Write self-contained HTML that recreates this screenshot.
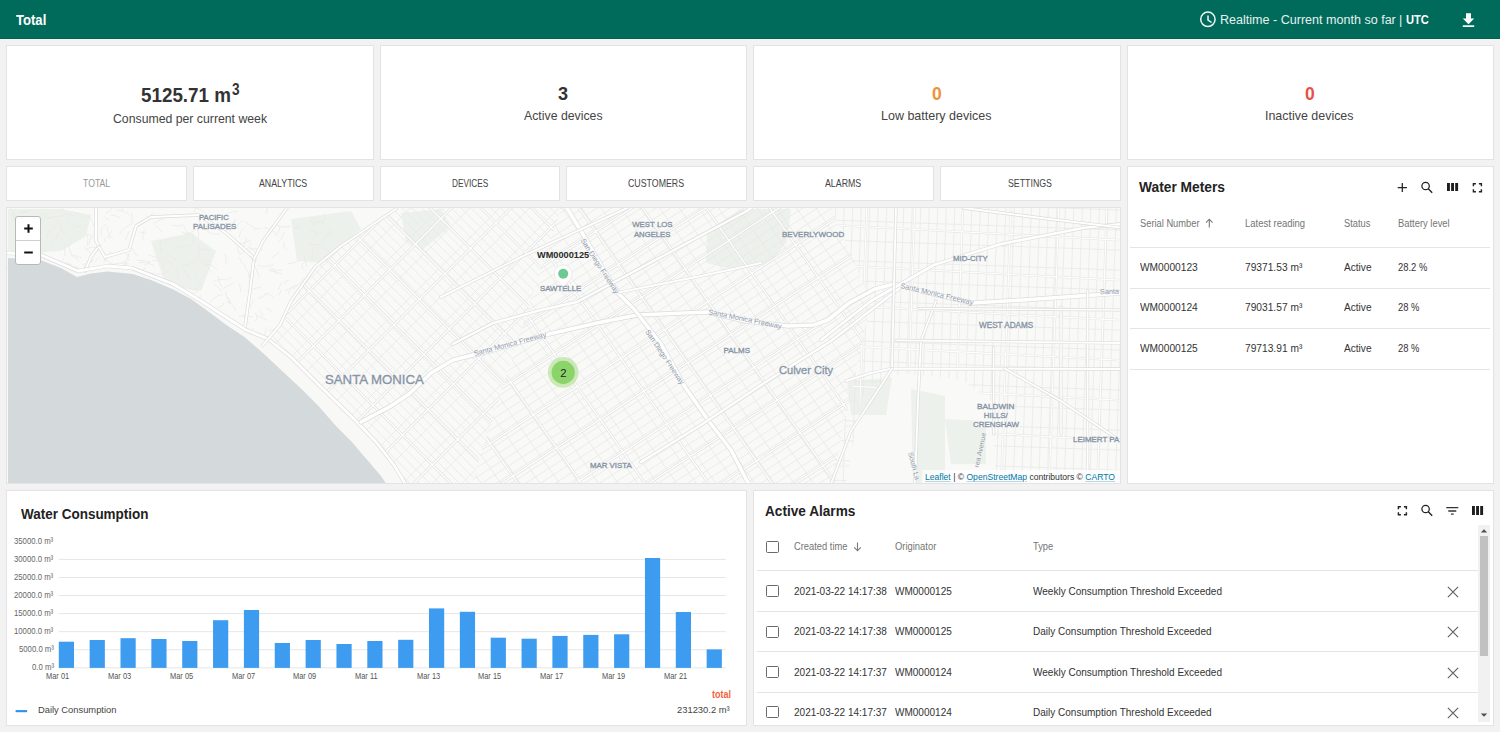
<!DOCTYPE html>
<html><head><meta charset="utf-8">
<style>
*{box-sizing:border-box;margin:0;padding:0}
html,body{width:1500px;height:732px;overflow:hidden;background:#f2f2f2;font-family:"Liberation Sans",sans-serif;color:#333}
.abs{position:absolute}
.tx{position:absolute;white-space:nowrap;line-height:normal;transform-origin:0 0}
.ml{text-shadow:0 0 2px #fff,0 0 2px #fff;-webkit-text-stroke:0.35px #8794a5}
.fl{position:absolute;white-space:nowrap;transform-origin:50% 50% !important;color:#8e9aab;font-family:'Liberation Sans',sans-serif;text-shadow:0 0 2px #fff}
.card{position:absolute;background:#fff;border:1px solid #e3e3e3}
.hl{position:absolute;height:1px;background:#e4e4e4}
svg{position:absolute}
.cb{position:absolute;width:13px;height:12px;border:1.6px solid #6a6a6a;border-radius:1.5px}
</style></head><body>

<div class="abs" style="left:0;top:0;width:1500px;height:39px;background:#006b5b"></div>
<div class="abs" style="left:0;top:38px;width:1500px;height:1px;background:#045f50"></div>
<svg style="left:1199px;top:11px" width="18" height="17" viewBox="0 0 18 17"><circle cx="8.9" cy="8.3" r="7.2" fill="none" stroke="#f2f7f6" stroke-width="1.5"/><path d="M9.0 4.6V9.0L12.6 11.5" fill="none" stroke="#f2f7f6" stroke-width="1.5"/></svg>
<svg style="left:1462px;top:13px" width="13" height="14" viewBox="0 0 13 14"><path d="M4 0.3h5v5.2h3.2L6.5 11.2 0.8 5.5H4z" fill="#fff"/><rect x="0.8" y="12.3" width="11.4" height="1.7" fill="#fff"/></svg>
<div class="card" style="left:6px;top:45px;width:368px;height:115px"></div>
<div class="card" style="left:380px;top:45px;width:367px;height:115px"></div>
<div class="card" style="left:753px;top:45px;width:368px;height:115px"></div>
<div class="card" style="left:1127px;top:45px;width:367px;height:115px"></div>
<div class="card" style="left:6px;top:166px;width:181px;height:35px"></div>
<div class="card" style="left:193px;top:166px;width:181px;height:35px"></div>
<div class="card" style="left:380px;top:166px;width:180px;height:35px"></div>
<div class="card" style="left:566px;top:166px;width:181px;height:35px"></div>
<div class="card" style="left:753px;top:166px;width:181px;height:35px"></div>
<div class="card" style="left:940px;top:166px;width:181px;height:35px"></div>
<div class="card" style="left:6px;top:207px;width:1115px;height:277px;overflow:hidden;background:#f9f9f7">
<svg style="left:0;top:0" width="1115" height="277" viewBox="6 207 1115 277">
<defs>
<clipPath id="cA"><polygon points="395,207 560,207 470,484 386,484 262,344 279,324 314,266 380,218"/></clipPath>
<clipPath id="cC"><polygon points="560,207 830,207 870,300 830,484 470,484"/></clipPath>
<clipPath id="cR"><polygon points="830,207 1121,207 1121,484 995,484 990,400 960,378 900,372 860,395 845,484 830,484 870,300"/></clipPath>
<clipPath id="cH"><polygon points="6,207 395,207 380,218 314,266 279,324 262,344 6,344"/></clipPath>
</defs>
<rect x="6" y="207" width="1115" height="277" fill="#f9f9f7"/>
<g fill="#edf1eb">
<polygon points="7,208 60,208 90,214 85,235 60,250 30,252 7,250"/>
<polygon points="150,240 190,232 215,250 200,290 165,285"/>
<polygon points="290,218 350,210 360,228 320,262 296,260"/>
<polygon points="400,212 440,208 450,225 420,250 405,240"/>
<polygon points="706,230 740,208 790,208 786,240 770,262 735,269 705,262"/>
<polygon points="910,388 944,395 944,483 912,483"/><polygon points="846,380 891,377 885,414 850,414"/>
<polygon points="944,418 985,420 985,463 950,463"/>

</g>
<g clip-path="url(#cA)" fill="none">
<path d="M335.1 -135.8L900.8 429.9M330.2 -130.9L895.9 434.8M325.2 -125.9L890.9 439.8M320.3 -121.0L886.0 444.7M315.3 -116.0L881.0 449.7M310.4 -111.1L876.1 454.6M305.4 -106.1L871.1 459.6M300.5 -101.2L866.2 464.5M295.5 -96.2L861.2 469.5M290.6 -91.3L856.3 474.4M285.6 -86.3L851.3 479.4M280.7 -81.4L846.4 484.3M275.8 -76.4L841.4 489.2M270.8 -71.5L836.5 494.2M265.9 -66.5L831.5 499.1M260.9 -61.6L826.6 504.1M256.0 -56.6L821.6 509.0M251.0 -51.7L816.7 514.0M246.1 -46.7L811.7 518.9M241.1 -41.8L806.8 523.9M236.2 -36.8L801.8 528.8M231.2 -31.9L796.9 533.8M226.3 -26.9L791.9 538.7M221.3 -22.0L787.0 543.7M216.4 -17.0L782.0 548.6M211.4 -12.1L777.1 553.6M206.5 -7.1L772.1 558.5M201.5 -2.2L767.2 563.5M196.6 2.8L762.2 568.4M191.6 7.7L757.3 573.4M186.7 12.7L752.3 578.3M181.7 17.6L747.4 583.3M176.8 22.6L742.4 588.2M171.8 27.5L737.5 593.2M166.9 32.5L732.5 598.1M161.9 37.4L727.6 603.1M157.0 42.4L722.6 608.0M152.0 47.3L717.7 613.0M147.1 52.3L712.7 617.9M142.1 57.2L707.8 622.9M137.2 62.2L702.8 627.8M132.2 67.1L697.9 632.8M127.3 72.1L692.9 637.7M122.3 77.0L688.0 642.7M117.4 82.0L683.0 647.6M112.4 86.9L678.1 652.6M107.5 91.9L673.1 657.5M102.5 96.8L668.2 662.5M97.6 101.8L663.2 667.4M92.6 106.7L658.3 672.4M87.7 111.7L653.3 677.3M82.7 116.6L648.4 682.3M77.8 121.6L643.4 687.2M72.8 126.5L638.5 692.2M67.9 131.5L633.5 697.1M62.9 136.4L628.6 702.1M58.0 141.4L623.6 707.0M53.0 146.3L618.7 712.0M48.1 151.3L613.7 716.9M43.1 156.2L608.8 721.9M38.2 161.2L603.8 726.8M33.2 166.1L598.9 731.8M28.3 171.1L593.9 736.7M23.3 176.0L589.0 741.7M18.4 181.0L584.0 746.6M13.4 185.9L579.1 751.6M8.5 190.9L574.1 756.5M3.5 195.8L569.2 761.5M-1.4 200.8L564.2 766.4M-6.4 205.7L559.3 771.4M-11.3 210.6L554.4 776.3M-16.3 215.6L549.4 781.3M-21.2 220.5L544.5 786.2M-26.2 225.5L539.5 791.2M-31.1 230.4L534.6 796.1M-36.1 235.4L529.6 801.1M-41.0 240.3L524.7 806.0M-46.0 245.3L519.7 811.0M-50.9 250.2L514.8 815.9M-55.9 255.2L509.8 820.9M-60.8 260.1L504.9 825.8" stroke="#e9e9e7" stroke-width="0.8"/>
<path d="M-159.8 330.9L405.9 -234.8M-145.0 345.7L420.7 -220.0M-130.1 360.6L435.6 -205.1M-115.3 375.4L450.4 -190.3M-100.4 390.3L465.3 -175.4M-85.6 405.1L480.1 -160.6M-70.7 420.0L495.0 -145.7M-55.9 434.8L509.8 -130.9M-41.0 449.7L524.7 -116.0M-26.2 464.5L539.5 -101.2M-11.3 479.4L554.4 -86.3M3.5 494.2L569.2 -71.5M18.4 509.0L584.0 -56.6M33.2 523.9L598.9 -41.8M48.1 538.7L613.7 -26.9M62.9 553.6L628.6 -12.1M77.8 568.4L643.4 2.8M92.6 583.3L658.3 17.6M107.5 598.1L673.1 32.5M122.3 613.0L688.0 47.3M137.2 627.8L702.8 62.2M152.0 642.7L717.7 77.0M166.9 657.5L732.5 91.9M181.7 672.4L747.4 106.7M196.6 687.2L762.2 121.6M211.4 702.1L777.1 136.4M226.3 716.9L791.9 151.3M241.1 731.8L806.8 166.1M256.0 746.6L821.6 181.0M270.8 761.5L836.5 195.8M285.6 776.3L851.3 210.6M300.5 791.2L866.2 225.5M315.3 806.0L881.0 240.3M330.2 820.9L895.9 255.2M345.0 835.7L910.7 270.0M359.9 850.6L925.6 284.9M374.7 865.4L940.4 299.7M389.6 880.3L955.3 314.6M404.4 895.1L970.1 329.4M419.3 910.0L985.0 344.3M434.1 924.8L999.8 359.1" stroke="#e9e9e7" stroke-width="0.8"/>
<path d="M-154.2 336.5L411.5 -229.2M-124.5 366.2L441.2 -199.5M-94.8 395.9L470.9 -169.8M-65.1 425.6L500.6 -140.1M-35.4 455.3L530.3 -110.4M-5.7 485.0L560.0 -80.7M24.0 514.7L589.7 -51.0M53.7 544.4L619.4 -21.3M83.4 574.1L649.1 8.4M113.1 603.8L678.8 38.1M142.8 633.5L708.5 67.8M172.5 663.2L738.2 97.5M202.2 692.9L767.9 127.2M231.9 722.6L797.6 156.9M261.6 752.3L827.3 186.6M291.3 782.0L857.0 216.3M321.0 811.7L886.7 246.0M350.7 841.4L916.4 275.7M380.4 871.1L946.1 305.4M410.1 900.8L975.8 335.1M439.8 930.5L1005.5 364.8" stroke="#dfdfdf" stroke-width="2.6"/>
<path d="M439.8 -240.5L1005.5 325.2M414.3 -215.0L980.0 350.7M388.9 -189.6L954.6 376.1M363.4 -164.1L929.1 401.6M338.0 -138.7L903.7 427.0M312.5 -113.2L878.2 452.5M287.1 -87.7L852.7 477.9M261.6 -62.3L827.3 503.4M236.2 -36.8L801.8 528.8M210.7 -11.4L776.4 554.3M185.2 14.1L750.9 579.8M159.8 39.5L725.5 605.2M134.3 65.0L700.0 630.7M108.9 90.4L674.6 656.1M83.4 115.9L649.1 681.6M58.0 141.4L623.6 707.0M32.5 166.8L598.2 732.5M7.0 192.3L572.7 758.0M-18.4 217.7L547.3 783.4M-43.9 243.2L521.8 808.9M-69.3 268.6L496.4 834.3M-94.8 294.1L470.9 859.8M-120.2 319.5L445.5 885.2M-145.7 345.0L420.0 910.7M-171.1 370.5L394.5 936.1" stroke="#dfdfdf" stroke-width="2.6"/>
<path d="M-154.2 336.5L411.5 -229.2M-124.5 366.2L441.2 -199.5M-94.8 395.9L470.9 -169.8M-65.1 425.6L500.6 -140.1M-35.4 455.3L530.3 -110.4M-5.7 485.0L560.0 -80.7M24.0 514.7L589.7 -51.0M53.7 544.4L619.4 -21.3M83.4 574.1L649.1 8.4M113.1 603.8L678.8 38.1M142.8 633.5L708.5 67.8M172.5 663.2L738.2 97.5M202.2 692.9L767.9 127.2M231.9 722.6L797.6 156.9M261.6 752.3L827.3 186.6M291.3 782.0L857.0 216.3M321.0 811.7L886.7 246.0M350.7 841.4L916.4 275.7M380.4 871.1L946.1 305.4M410.1 900.8L975.8 335.1M439.8 930.5L1005.5 364.8" stroke="#fff" stroke-width="1.4"/>
<path d="M439.8 -240.5L1005.5 325.2M414.3 -215.0L980.0 350.7M388.9 -189.6L954.6 376.1M363.4 -164.1L929.1 401.6M338.0 -138.7L903.7 427.0M312.5 -113.2L878.2 452.5M287.1 -87.7L852.7 477.9M261.6 -62.3L827.3 503.4M236.2 -36.8L801.8 528.8M210.7 -11.4L776.4 554.3M185.2 14.1L750.9 579.8M159.8 39.5L725.5 605.2M134.3 65.0L700.0 630.7M108.9 90.4L674.6 656.1M83.4 115.9L649.1 681.6M58.0 141.4L623.6 707.0M32.5 166.8L598.2 732.5M7.0 192.3L572.7 758.0M-18.4 217.7L547.3 783.4M-43.9 243.2L521.8 808.9M-69.3 268.6L496.4 834.3M-94.8 294.1L470.9 859.8M-120.2 319.5L445.5 885.2M-145.7 345.0L420.0 910.7M-171.1 370.5L394.5 936.1" stroke="#fff" stroke-width="1.4"/>
</g>
<g clip-path="url(#cC)" fill="none">
<path d="M-103.3 241.6L735.3 -303.0M-99.0 248.3L739.7 -296.3M-94.6 255.0L744.1 -289.6M-90.3 261.7L748.4 -282.9M-85.9 268.4L752.8 -276.2M-81.5 275.1L757.1 -269.5M-77.2 281.9L761.5 -262.8M-72.8 288.6L765.8 -256.1M-68.5 295.3L770.2 -249.4M-64.1 302.0L774.6 -242.7M-59.8 308.7L778.9 -236.0M-55.4 315.4L783.3 -229.2M-51.0 322.1L787.6 -222.5M-46.7 328.8L792.0 -215.8M-42.3 335.5L796.3 -209.1M-38.0 342.2L800.7 -202.4M-33.6 348.9L805.1 -195.7M-29.3 355.7L809.4 -189.0M-24.9 362.4L813.8 -182.3M-20.5 369.1L818.1 -175.6M-16.2 375.8L822.5 -168.9M-11.8 382.5L826.8 -162.1M-7.5 389.2L831.2 -155.4M-3.1 395.9L835.6 -148.7M1.2 402.6L839.9 -142.0M5.6 409.3L844.3 -135.3M10.0 416.0L848.6 -128.6M14.3 422.7L853.0 -121.9M18.7 429.5L857.3 -115.2M23.0 436.2L861.7 -108.5M27.4 442.9L866.1 -101.8M31.7 449.6L870.4 -95.1M36.1 456.3L874.8 -88.3M40.5 463.0L879.1 -81.6M44.8 469.7L883.5 -74.9M49.2 476.4L887.8 -68.2M53.5 483.1L892.2 -61.5M57.9 489.8L896.6 -54.8M62.2 496.6L900.9 -48.1M66.6 503.3L905.3 -41.4M71.0 510.0L909.6 -34.7M75.3 516.7L914.0 -28.0M79.7 523.4L918.3 -21.3M84.0 530.1L922.7 -14.5M88.4 536.8L927.0 -7.8M92.7 543.5L931.4 -1.1M97.1 550.2L935.8 5.6M101.5 556.9L940.1 12.3M105.8 563.6L944.5 19.0M110.2 570.4L948.8 25.7M114.5 577.1L953.2 32.4M118.9 583.8L957.5 39.1M123.2 590.5L961.9 45.8M127.6 597.2L966.3 52.6M132.0 603.9L970.6 59.3M136.3 610.6L975.0 66.0M140.7 617.3L979.3 72.7M145.0 624.0L983.7 79.4M149.4 630.7L988.0 86.1M153.7 637.4L992.4 92.8M158.1 644.2L996.8 99.5M162.5 650.9L1001.1 106.2M166.8 657.6L1005.5 112.9M171.2 664.3L1009.8 119.6M175.5 671.0L1014.2 126.4M179.9 677.7L1018.5 133.1M184.2 684.4L1022.9 139.8M188.6 691.1L1027.3 146.5M193.0 697.8L1031.6 153.2M197.3 704.5L1036.0 159.9M201.7 711.3L1040.3 166.6M206.0 718.0L1044.7 173.3M210.4 724.7L1049.0 180.0M214.7 731.4L1053.4 186.7M219.1 738.1L1057.8 193.4M223.4 744.8L1062.1 200.2M227.8 751.5L1066.5 206.9M232.2 758.2L1070.8 213.6M236.5 764.9L1075.2 220.3M240.9 771.6L1079.5 227.0M245.2 778.3L1083.9 233.7M249.6 785.1L1088.3 240.4M253.9 791.8L1092.6 247.1M258.3 798.5L1097.0 253.8M262.7 805.2L1101.3 260.5M267.0 811.9L1105.7 267.3M271.4 818.6L1110.0 274.0M275.7 825.3L1114.4 280.7M280.1 832.0L1118.8 287.4M284.4 838.7L1123.1 294.1M288.8 845.4L1127.5 300.8M293.2 852.1L1131.8 307.5M297.5 858.9L1136.2 314.2M301.9 865.6L1140.5 320.9M306.2 872.3L1144.9 327.6M310.6 879.0L1149.3 334.3M314.9 885.7L1153.6 341.1M319.3 892.4L1158.0 347.8M323.7 899.1L1162.3 354.5M328.0 905.8L1166.7 361.2M332.4 912.5L1171.0 367.9M336.7 919.2L1175.4 374.6M341.1 926.0L1179.8 381.3M345.4 932.7L1184.1 388.0M349.8 939.4L1188.5 394.7M354.2 946.1L1192.8 401.4M358.5 952.8L1197.2 408.1M362.9 959.5L1201.5 414.9M367.2 966.2L1205.9 421.6M371.6 972.9L1210.3 428.3M375.9 979.6L1214.6 435.0M380.3 986.3L1219.0 441.7M384.7 993.0L1223.3 448.4" stroke="#e9e9e7" stroke-width="0.8"/>
<path d="M797.5 -431.7L1371.0 387.5M784.4 -422.5L1357.9 396.7M771.3 -413.3L1344.8 405.8M758.1 -404.1L1331.7 415.0M745.0 -395.0L1318.6 424.2M731.9 -385.8L1305.5 433.4M718.8 -376.6L1292.4 442.6M705.7 -367.4L1279.3 451.7M692.6 -358.2L1266.2 460.9M679.5 -349.1L1253.1 470.1M666.4 -339.9L1240.0 479.3M653.3 -330.7L1226.9 488.4M640.2 -321.5L1213.8 497.6M627.1 -312.4L1200.7 506.8M614.0 -303.2L1187.6 516.0M600.9 -294.0L1174.4 525.1M587.8 -284.8L1161.3 534.3M574.7 -275.7L1148.2 543.5M561.6 -266.5L1135.1 552.7M548.4 -257.3L1122.0 561.9M535.3 -248.1L1108.9 571.0M522.2 -238.9L1095.8 580.2M509.1 -229.8L1082.7 589.4M496.0 -220.6L1069.6 598.6M482.9 -211.4L1056.5 607.7M469.8 -202.2L1043.4 616.9M456.7 -193.1L1030.3 626.1M443.6 -183.9L1017.2 635.3M430.5 -174.7L1004.1 644.4M417.4 -165.5L991.0 653.6M404.3 -156.3L977.9 662.8M391.2 -147.2L964.7 672.0M378.1 -138.0L951.6 681.2M365.0 -128.8L938.5 690.3M351.9 -119.6L925.4 699.5M338.7 -110.5L912.3 708.7M325.6 -101.3L899.2 717.9M312.5 -92.1L886.1 727.0M299.4 -82.9L873.0 736.2M286.3 -73.8L859.9 745.4M273.2 -64.6L846.8 754.6M260.1 -55.4L833.7 763.8M247.0 -46.2L820.6 772.9M233.9 -37.0L807.5 782.1M220.8 -27.9L794.4 791.3M207.7 -18.7L781.3 800.5M194.6 -9.5L768.1 809.6M181.5 -0.3L755.0 818.8M168.4 8.8L741.9 828.0M155.3 18.0L728.8 837.2M142.1 27.2L715.7 846.3M129.0 36.4L702.6 855.5M115.9 45.6L689.5 864.7M102.8 54.7L676.4 873.9M89.7 63.9L663.3 883.1M76.6 73.1L650.2 892.2M63.5 82.3L637.1 901.4M50.4 91.4L624.0 910.6M37.3 100.6L610.9 919.8M24.2 109.8L597.8 928.9M11.1 119.0L584.7 938.1M-2.0 128.1L571.6 947.3M-15.1 137.3L558.4 956.5M-28.2 146.5L545.3 965.7M-41.3 155.7L532.2 974.8M-54.4 164.9L519.1 984.0M-67.6 174.0L506.0 993.2M-80.7 183.2L492.9 1002.4M-93.8 192.4L479.8 1011.5M-106.9 201.6L466.7 1020.7M-120.0 210.7L453.6 1029.9M-133.1 219.9L440.5 1039.1M-146.2 229.1L427.4 1048.2M-159.3 238.3L414.3 1057.4M-172.4 247.4L401.2 1066.6M-185.5 256.6L388.1 1075.8M-198.6 265.8L375.0 1085.0M-211.7 275.0L361.9 1094.1M-224.8 284.2L348.7 1103.3M-237.9 293.3L335.6 1112.5M-251.0 302.5L322.5 1121.7" stroke="#e9e9e7" stroke-width="0.8"/>
<path d="M-119.1 217.3L719.5 -327.4M-97.3 250.8L741.3 -293.8M-75.6 284.4L763.1 -260.3M-53.8 317.9L784.9 -226.7M-32.0 351.5L806.7 -193.2M-10.2 385.0L828.5 -159.6M11.6 418.6L850.3 -126.1M33.4 452.1L872.0 -92.5M55.2 485.6L893.8 -59.0M76.9 519.2L915.6 -25.4M98.7 552.7L937.4 8.1M120.5 586.3L959.2 41.6M142.3 619.8L981.0 75.2M164.1 653.4L1002.8 108.7M185.9 686.9L1024.5 142.3M207.7 720.5L1046.3 175.8M229.4 754.0L1068.1 209.4M251.2 787.6L1089.9 242.9M273.0 821.1L1111.7 276.5M294.8 854.7L1133.5 310.0M316.6 888.2L1155.3 343.6M338.4 921.8L1177.0 377.1M360.2 955.3L1198.8 410.7M381.9 988.9L1220.6 444.2M403.7 1022.4L1242.4 477.8" stroke="#dfdfdf" stroke-width="2.6"/>
<path d="M776.2 -416.8L1349.7 402.4M733.6 -386.9L1307.2 432.2M691.0 -357.1L1264.6 462.1M648.4 -327.3L1222.0 491.9M605.8 -297.4L1179.4 521.7M563.2 -267.6L1136.8 551.5M520.6 -237.8L1094.2 581.4M478.0 -208.0L1051.6 611.2M435.4 -178.1L1009.0 641.0M392.8 -148.3L966.4 670.8M350.2 -118.5L923.8 700.7M307.6 -88.7L881.2 730.5M265.0 -58.8L838.6 760.3M222.4 -29.0L796.0 790.1M179.8 0.8L753.4 820.0M137.2 30.6L710.8 849.8M94.6 60.5L668.2 879.6M52.0 90.3L625.6 909.4M9.4 120.1L583.0 939.3M-33.2 149.9L540.4 969.1M-75.7 179.8L497.8 998.9M-118.3 209.6L455.2 1028.7M-160.9 239.4L412.6 1058.6M-203.5 269.2L370.0 1088.4M-246.1 299.1L327.4 1118.2" stroke="#dfdfdf" stroke-width="2.6"/>
<path d="M-119.1 217.3L719.5 -327.4M-97.3 250.8L741.3 -293.8M-75.6 284.4L763.1 -260.3M-53.8 317.9L784.9 -226.7M-32.0 351.5L806.7 -193.2M-10.2 385.0L828.5 -159.6M11.6 418.6L850.3 -126.1M33.4 452.1L872.0 -92.5M55.2 485.6L893.8 -59.0M76.9 519.2L915.6 -25.4M98.7 552.7L937.4 8.1M120.5 586.3L959.2 41.6M142.3 619.8L981.0 75.2M164.1 653.4L1002.8 108.7M185.9 686.9L1024.5 142.3M207.7 720.5L1046.3 175.8M229.4 754.0L1068.1 209.4M251.2 787.6L1089.9 242.9M273.0 821.1L1111.7 276.5M294.8 854.7L1133.5 310.0M316.6 888.2L1155.3 343.6M338.4 921.8L1177.0 377.1M360.2 955.3L1198.8 410.7M381.9 988.9L1220.6 444.2M403.7 1022.4L1242.4 477.8" stroke="#fff" stroke-width="1.4"/>
<path d="M776.2 -416.8L1349.7 402.4M733.6 -386.9L1307.2 432.2M691.0 -357.1L1264.6 462.1M648.4 -327.3L1222.0 491.9M605.8 -297.4L1179.4 521.7M563.2 -267.6L1136.8 551.5M520.6 -237.8L1094.2 581.4M478.0 -208.0L1051.6 611.2M435.4 -178.1L1009.0 641.0M392.8 -148.3L966.4 670.8M350.2 -118.5L923.8 700.7M307.6 -88.7L881.2 730.5M265.0 -58.8L838.6 760.3M222.4 -29.0L796.0 790.1M179.8 0.8L753.4 820.0M137.2 30.6L710.8 849.8M94.6 60.5L668.2 879.6M52.0 90.3L625.6 909.4M9.4 120.1L583.0 939.3M-33.2 149.9L540.4 969.1M-75.7 179.8L497.8 998.9M-118.3 209.6L455.2 1028.7M-160.9 239.4L412.6 1058.6M-203.5 269.2L370.0 1088.4M-246.1 299.1L327.4 1118.2" stroke="#fff" stroke-width="1.4"/>
</g>
<g clip-path="url(#cR)" fill="none">
<path d="M649.7 633.0L670.7 33.3M658.2 633.2L679.2 33.6M666.7 633.5L687.7 33.9M675.2 633.8L696.2 34.2M683.7 634.1L704.7 34.5M692.2 634.4L713.2 34.8M700.7 634.7L721.6 35.1M709.2 635.0L730.1 35.4M717.7 635.3L738.6 35.7M726.2 635.6L747.1 36.0M734.7 635.9L755.6 36.3M743.2 636.2L764.1 36.6M751.7 636.5L772.6 36.9M760.2 636.8L781.1 37.2M768.7 637.1L789.6 37.5M777.2 637.4L798.1 37.8M785.7 637.7L806.6 38.1M794.1 638.0L815.1 38.4M802.6 638.3L823.6 38.7M811.1 638.6L832.1 39.0M819.6 638.9L840.6 39.2M828.1 639.2L849.1 39.5M836.6 639.5L857.6 39.8M845.1 639.8L866.1 40.1M853.6 640.1L874.6 40.4M862.1 640.4L883.0 40.7M870.6 640.7L891.5 41.0M879.1 641.0L900.0 41.3M887.6 641.3L908.5 41.6M896.1 641.6L917.0 41.9M904.6 641.9L925.5 42.2M913.1 642.1L934.0 42.5M921.6 642.4L942.5 42.8M930.1 642.7L951.0 43.1M938.6 643.0L959.5 43.4M947.1 643.3L968.0 43.7M955.6 643.6L976.5 44.0M964.0 643.9L985.0 44.3M972.5 644.2L993.5 44.6M981.0 644.5L1002.0 44.9M989.5 644.8L1010.5 45.2M998.0 645.1L1019.0 45.5M1006.5 645.4L1027.5 45.8M1015.0 645.7L1036.0 46.1M1023.5 646.0L1044.4 46.4M1032.0 646.3L1052.9 46.7M1040.5 646.6L1061.4 47.0M1049.0 646.9L1069.9 47.3M1057.5 647.2L1078.4 47.6M1066.0 647.5L1086.9 47.9M1074.5 647.8L1095.4 48.1M1083.0 648.1L1103.9 48.4M1091.5 648.4L1112.4 48.7M1100.0 648.7L1120.9 49.0M1108.5 649.0L1129.4 49.3M1117.0 649.3L1137.9 49.6M1125.4 649.6L1146.4 49.9M1133.9 649.9L1154.9 50.2M1142.4 650.2L1163.4 50.5M1150.9 650.5L1171.9 50.8M1159.4 650.8L1180.4 51.1M1167.9 651.0L1188.9 51.4M1176.4 651.3L1197.4 51.7M1184.9 651.6L1205.9 52.0M1193.4 651.9L1214.3 52.3M1201.9 652.2L1222.8 52.6M1210.4 652.5L1231.3 52.9M1218.9 652.8L1239.8 53.2M1227.4 653.1L1248.3 53.5M1235.9 653.4L1256.8 53.8M1244.4 653.7L1265.3 54.1M1252.9 654.0L1273.8 54.4M1261.4 654.3L1282.3 54.7M1269.9 654.6L1290.8 55.0M1278.4 654.9L1299.3 55.3M1286.8 655.2L1307.8 55.6M1295.3 655.5L1316.3 55.9M1303.8 655.8L1324.8 56.2M1312.3 656.1L1333.3 56.5M1320.8 656.4L1341.8 56.8M1329.3 656.7L1350.3 57.0" stroke="#e9e9e7" stroke-width="0.8"/>
<path d="M707.2 134.7L1306.8 155.6M706.5 154.6L1306.1 175.6M705.8 174.6L1305.4 195.6M705.1 194.6L1304.7 215.6M704.4 214.6L1304.0 235.5M703.7 234.6L1303.3 255.5M703.0 254.6L1302.6 275.5M702.3 274.6L1301.9 295.5M701.6 294.6L1301.2 315.5M700.9 314.5L1300.5 335.5M700.2 334.5L1299.8 355.5M699.5 354.5L1299.1 375.5M698.8 374.5L1298.4 395.4M698.1 394.5L1297.7 415.4M697.4 414.5L1297.0 435.4M696.7 434.5L1296.3 455.4M696.0 454.5L1295.6 475.4M695.3 474.4L1294.9 495.4M694.6 494.4L1294.2 515.4M693.9 514.4L1293.5 535.4M693.2 534.4L1292.8 555.3" stroke="#e9e9e7" stroke-width="0.8"/>
<path d="M610.8 631.6L631.7 32.0M658.7 633.3L679.7 33.6M706.7 634.9L727.6 35.3M754.7 636.6L775.6 37.0M802.6 638.3L823.6 38.7M850.6 640.0L871.6 40.3M898.6 641.6L919.5 42.0M946.6 643.3L967.5 43.7M994.5 645.0L1015.5 45.4M1042.5 646.7L1063.4 47.0M1090.5 648.3L1111.4 48.7M1138.4 650.0L1159.4 50.4M1186.4 651.7L1207.3 52.1M1234.4 653.4L1255.3 53.7M1282.4 655.0L1303.3 55.4M1330.3 656.7L1351.3 57.1M1378.3 658.4L1399.2 58.8" stroke="#e6e6e5" stroke-width="2.2"/>
<path d="M710.5 137.6L1309.6 169.0M708.4 177.5L1307.5 208.9M706.3 217.5L1305.5 248.9M704.2 257.4L1303.4 288.8M702.1 297.3L1301.3 328.7M700.0 337.3L1299.2 368.7M697.9 377.2L1297.1 408.6M695.8 417.2L1295.0 448.6M693.7 457.1L1292.9 488.5M691.6 497.1L1290.8 528.5M689.5 537.0L1288.7 568.4" stroke="#e6e6e5" stroke-width="2.2"/>
<path d="M610.8 631.6L631.7 32.0M658.7 633.3L679.7 33.6M706.7 634.9L727.6 35.3M754.7 636.6L775.6 37.0M802.6 638.3L823.6 38.7M850.6 640.0L871.6 40.3M898.6 641.6L919.5 42.0M946.6 643.3L967.5 43.7M994.5 645.0L1015.5 45.4M1042.5 646.7L1063.4 47.0M1090.5 648.3L1111.4 48.7M1138.4 650.0L1159.4 50.4M1186.4 651.7L1207.3 52.1M1234.4 653.4L1255.3 53.7M1282.4 655.0L1303.3 55.4M1330.3 656.7L1351.3 57.1M1378.3 658.4L1399.2 58.8" stroke="#fff" stroke-width="1.1"/>
<path d="M710.5 137.6L1309.6 169.0M708.4 177.5L1307.5 208.9M706.3 217.5L1305.5 248.9M704.2 257.4L1303.4 288.8M702.1 297.3L1301.3 328.7M700.0 337.3L1299.2 368.7M697.9 377.2L1297.1 408.6M695.8 417.2L1295.0 448.6M693.7 457.1L1292.9 488.5M691.6 497.1L1290.8 528.5M689.5 537.0L1288.7 568.4" stroke="#fff" stroke-width="1.1"/>
</g>
<g clip-path="url(#cH)" fill="none" stroke="#e8e8e6" stroke-width="0.7">
<path d="M85 283q-3.1 0.9 -8.2 8.8"/>
<path d="M12 323q3.7 3.9 -0.5 8.3"/>
<path d="M277 273q-1.3 0.1 -4.8 -5.7"/>
<path d="M176 310q0.5 -2.2 -3.2 -5.8"/>
<path d="M105 212q5.3 -1.0 7.1 -8.0"/>
<path d="M238 334q-6.0 7.8 -11.1 8.6"/>
<path d="M291 221q6.4 2.6 5.4 6.2"/>
<path d="M210 249q-6.1 0.5 -9.8 -0.4"/>
<path d="M196 332q-0.3 -3.0 -6.4 -13.9"/>
<path d="M224 230q8.2 -5.5 10.0 -12.0"/>
<path d="M238 237q1.1 -8.6 5.7 -10.2"/>
<path d="M283 344q5.2 0.9 11.9 7.4"/>
<path d="M103 313q3.2 -6.0 4.5 -4.6"/>
<path d="M239 253q5.8 -1.4 11.6 -10.8"/>
<path d="M108 219q-5.0 -2.6 -5.1 -3.7"/>
<path d="M205 229q5.6 5.6 14.2 3.9"/>
<path d="M297 260q-4.3 2.2 -10.9 2.8"/>
<path d="M188 293q4.6 -0.3 10.3 -4.1"/>
<path d="M85 249q5.9 -4.7 11.1 -1.6"/>
<path d="M142 287q7.1 -2.8 12.1 1.5"/>
<path d="M210 272q-0.4 -2.4 -4.1 -8.6"/>
<path d="M15 216q-5.5 -7.3 -7.0 -14.0"/>
<path d="M199 252q-4.0 4.2 -6.0 6.9"/>
<path d="M105 260q1.0 -1.2 0.9 -6.2"/>
<path d="M108 238q-1.1 -4.5 2.8 -7.9"/>
<path d="M233 222q0.6 3.7 -4.1 8.4"/>
<path d="M283 231q-0.2 5.0 -6.5 10.7"/>
<path d="M80 225q-1.4 2.0 -7.8 -1.5"/>
<path d="M67 246q4.6 -7.1 4.3 -11.6"/>
<path d="M50 248q-0.1 -4.9 2.3 -8.4"/>
<path d="M143 264q-0.6 1.7 6.6 -3.6"/>
<path d="M291 343q-3.7 0.9 -14.2 6.2"/>
<path d="M248 323q-4.6 -6.0 -5.8 -9.5"/>
<path d="M81 217q-1.3 -6.0 -7.5 -4.7"/>
<path d="M299 303q9.8 -2.8 13.3 -6.9"/>
<path d="M12 310q3.4 4.2 4.2 7.9"/>
<path d="M141 337q-5.6 -0.1 -7.2 -6.1"/>
<path d="M162 315q-2.1 5.7 -4.8 6.4"/>
<path d="M63 316q8.8 -7.3 12.4 -6.7"/>
<path d="M210 326q2.3 1.6 8.3 2.7"/>
<path d="M144 273q-3.1 -6.0 1.0 -5.9"/>
<path d="M48 217q3.9 -1.2 14.4 -2.3"/>
<path d="M110 251q-3.0 3.9 -7.4 10.0"/>
<path d="M70 253q5.8 3.1 8.2 8.1"/>
<path d="M34 232q-1.9 3.4 -8.4 8.6"/>
<path d="M266 293q-4.4 3.7 -8.8 4.1"/>
<path d="M143 303q-3.8 2.6 -8.2 2.1"/>
<path d="M31 266q-3.1 2.3 -13.2 6.7"/>
<path d="M297 316q-3.4 7.8 -0.8 10.6"/>
<path d="M221 330q3.5 -5.6 3.3 -12.2"/>
<path d="M41 289q5.9 -3.5 7.4 0.2"/>
<path d="M38 222q-1.0 0.1 5.7 -5.3"/>
<path d="M47 324q0.3 -5.7 -6.7 -12.7"/>
<path d="M265 213q2.3 -8.7 1.2 -11.0"/>
<path d="M249 336q4.8 4.4 8.6 3.5"/>
<path d="M86 233q2.0 5.2 0.0 12.2"/>
<path d="M126 262q-6.3 4.1 -6.0 8.2"/>
<path d="M321 265q1.5 -1.8 -0.1 -7.6"/>
<path d="M225 279q-3.0 -2.2 -12.4 1.3"/>
<path d="M39 310q4.4 -1.1 9.7 -5.6"/>
<path d="M68 245q0.4 3.5 3.7 11.3"/>
<path d="M231 339q-2.5 9.1 -3.7 12.5"/>
<path d="M196 245q0.5 2.1 1.3 6.1"/>
<path d="M63 257q-5.8 10.1 -6.0 12.4"/>
<path d="M162 290q-4.5 1.9 -14.1 2.9"/>
<path d="M163 307q5.0 -0.2 6.2 -7.9"/>
<path d="M159 239q2.0 10.2 1.3 13.1"/>
<path d="M283 241q-0.9 5.6 3.2 8.0"/>
<path d="M284 331q-1.7 6.7 -0.4 14.6"/>
<path d="M243 220q4.3 2.8 12.0 7.9"/>
<path d="M195 301q4.2 0.1 9.3 0.4"/>
<path d="M76 288q5.1 -4.4 9.5 -2.8"/>
<path d="M96 299q8.9 1.6 11.3 9.7"/>
<path d="M311 259q-0.7 -5.3 1.9 -13.4"/>
<path d="M219 318q3.0 8.1 -1.3 13.5"/>
<path d="M181 224q-3.0 1.6 -9.5 0.4"/>
<path d="M190 233q-6.3 -1.8 -7.5 -9.7"/>
<path d="M219 225q2.0 0.2 6.7 -3.1"/>
<path d="M200 284q-4.7 -6.8 -6.4 -8.4"/>
<path d="M30 306q2.1 -6.8 0.3 -11.4"/>
<path d="M94 261q2.3 -4.3 4.5 -4.6"/>
<path d="M256 257q-2.2 6.5 -5.0 8.7"/>
<path d="M122 324q0.1 -0.3 6.6 5.6"/>
<path d="M259 308q0.9 5.6 3.1 7.2"/>
<path d="M271 311q-3.9 -4.5 -6.3 -4.1"/>
<path d="M178 286q3.5 0.3 2.5 8.1"/>
<path d="M267 330q5.1 -0.9 9.3 -3.1"/>
<path d="M212 342q1.1 -4.3 -3.5 -8.3"/>
<path d="M202 308q8.1 0.0 13.7 0.2"/>
<path d="M177 271q-1.7 5.3 3.9 10.6"/>
<path d="M216 269q-4.0 -6.0 -14.3 -6.3"/>
<path d="M263 293q2.4 -1.9 9.1 3.0"/>
<path d="M182 335q-1.7 3.7 -6.5 13.2"/>
<path d="M284 290q7.8 -4.2 11.8 -5.9"/>
<path d="M268 336q5.4 -4.1 6.7 -7.9"/>
<path d="M43 214q0.8 1.9 7.1 3.8"/>
<path d="M233 282q-7.1 2.7 -11.0 5.9"/>
<path d="M252 263q4.9 5.7 6.3 13.6"/>
<path d="M127 281q-7.4 -4.7 -6.8 -4.7"/>
<path d="M260 228q-6.2 -1.6 -7.7 2.0"/>
<path d="M138 231q0.8 0.5 7.0 1.2"/>
<path d="M27 211q-3.1 -2.0 -9.5 3.2"/>
<path d="M138 262q5.5 -1.9 15.4 2.6"/>
<path d="M161 231q-6.4 -6.9 -6.8 -6.6"/>
<path d="M242 246q4.7 -6.8 2.5 -10.4"/>
<path d="M88 244q1.2 -8.9 4.8 -11.3"/>
<path d="M228 341q-6.3 -4.9 -5.1 -3.3"/>
<path d="M63 213q9.1 -0.3 11.8 4.2"/>
<path d="M322 273q6.0 -10.9 5.0 -14.3"/>
<path d="M106 291q1.6 1.7 6.5 -2.3"/>
<path d="M45 261q0.2 2.9 -6.4 11.1"/>
<path d="M246 309q6.3 -6.1 5.9 -9.9"/>
<path d="M142 239q-0.9 -8.0 2.0 -10.6"/>
<path d="M240 291q-1.3 -7.5 -2.4 -9.6"/>
<path d="M237 211q-5.2 -1.8 -13.3 2.8"/>
<path d="M84 324q-1.7 -6.2 -9.3 -11.5"/>
<path d="M297 308q-5.9 3.4 -4.9 8.4"/>
<path d="M316 222q-6.6 -0.3 -6.5 -3.0"/>
<path d="M86 215q4.3 1.2 7.2 10.2"/>
<path d="M82 341q0.4 8.0 2.2 11.4"/>
<path d="M203 316q-6.4 -4.2 -7.7 -1.7"/>
<path d="M274 223q5.3 4.3 15.5 2.4"/>
<path d="M36 272q2.1 8.2 2.4 14.1"/>
<path d="M253 327q-3.8 1.8 -6.8 9.9"/>
<path d="M277 289q1.9 -4.0 3.2 -7.4"/>
<path d="M242 219q-6.5 4.9 -6.2 8.9"/>
<path d="M245 266q-5.9 -6.0 -7.2 -9.7"/>
<path d="M329 254q-5.4 -1.2 -6.2 2.9"/>
<path d="M308 308q6.5 -2.2 11.2 -11.3"/>
<path d="M181 265q10.7 -2.6 14.2 -4.9"/>
<path d="M257 264q5.9 3.3 15.2 -0.3"/>
<path d="M67 221q-0.6 -3.3 -1.6 -8.8"/>
<path d="M21 310q-2.1 7.0 -1.7 10.2"/>
<path d="M248 247q2.9 -0.7 7.2 5.4"/>
<path d="M57 312q1.4 -4.5 -4.9 -15.0"/>
<path d="M128 230q-1.8 5.3 -4.0 9.8"/>
<path d="M124 325q1.9 7.6 -2.3 10.4"/>
<path d="M104 241q-1.9 -2.6 2.1 -5.7"/>
<path d="M181 231q6.0 1.0 7.6 2.5"/>
<path d="M323 316q0.6 -4.3 6.3 -0.8"/>
<path d="M147 254q2.2 0.3 10.9 3.6"/>
<path d="M88 318q-7.4 1.6 -7.5 4.2"/>
<path d="M210 301q4.0 -6.6 12.0 -7.4"/>
<path d="M252 316q-6.7 -2.1 -14.3 -0.8"/>
<path d="M62 210q-1.4 -6.1 -9.3 -11.7"/>
<path d="M222 335q1.7 -5.4 4.7 -11.1"/>
<path d="M63 233q-2.9 -8.0 -6.5 -14.5"/>
<path d="M121 270q5.4 -7.7 3.4 -10.0"/>
<path d="M109 280q-3.5 7.3 -12.3 7.6"/>
<path d="M205 212q-5.2 -4.3 -10.3 -5.2"/>
<path d="M236 333q4.0 3.9 10.2 7.6"/>
<path d="M296 340q0.9 -5.7 -4.9 -6.2"/>
<path d="M131 321q1.8 7.5 -3.5 8.0"/>
<path d="M110 262q-2.7 7.4 -1.5 7.2"/>
<path d="M34 239q1.3 5.2 2.1 6.5"/>
<path d="M278 294q-0.5 0.9 2.5 -5.5"/>
<path d="M30 245q-3.9 -3.1 -8.6 0.9"/>
<path d="M84 339q2.1 9.9 9.3 11.8"/>
<path d="M225 297q4.1 -0.0 4.1 5.1"/>
<path d="M69 321q6.0 -2.0 4.6 -4.6"/>
<path d="M131 223q-7.9 2.1 -12.2 10.1"/>
<path d="M55 225q-7.9 3.6 -9.1 12.1"/>
<path d="M310 345q3.0 3.1 8.4 -1.1"/>
<path d="M164 304q-2.4 4.9 -2.4 5.7"/>
<path d="M260 286q-6.0 1.6 -11.1 2.6"/>
<path d="M276 235q-3.6 -6.8 -12.7 -8.5"/>
<path d="M318 323q-0.2 0.2 4.3 7.5"/>
<path d="M323 264q-1.4 0.4 5.0 -5.1"/>
<path d="M264 344q-0.1 -8.4 -4.5 -10.3"/>
<path d="M182 268q2.2 4.8 7.3 9.5"/>
<path d="M128 252q0.1 8.2 -7.6 9.3"/>
<path d="M286 322q-3.6 4.7 -3.6 15.4"/>
<path d="M169 308q-5.1 9.0 -6.7 10.5"/>
<path d="M154 273q-3.3 -1.2 -14.5 -2.9"/>
<path d="M150 293q7.4 4.4 9.3 4.3"/>
<path d="M27 325q-7.0 3.0 -11.8 10.5"/>
<path d="M185 329q-5.0 2.0 -13.3 6.2"/>
<path d="M105 277q-2.7 5.9 -7.8 5.8"/>
<path d="M196 228q1.8 1.9 1.8 9.5"/>
<path d="M34 252q-0.3 6.5 -1.3 6.2"/>
<path d="M180 309q6.7 -6.8 6.8 -12.7"/>
<path d="M228 225q3.4 -0.2 7.1 -6.7"/>
<path d="M100 234q-0.7 -9.1 5.3 -10.7"/>
<path d="M121 209q0.1 -4.3 3.9 -6.8"/>
<path d="M173 267q-4.9 -7.8 -8.7 -9.1"/>
<path d="M323 303q6.5 6.5 9.0 5.2"/>
<path d="M29 209q-1.9 3.3 -10.1 1.3"/>
<path d="M115 265q-8.8 -4.5 -12.9 -7.4"/>
<path d="M36 296q7.8 1.9 15.1 2.5"/>
<path d="M35 240q-6.8 -0.3 -14.3 2.9"/>
<path d="M324 299q-5.6 2.5 -7.9 -1.4"/>
<path d="M51 281q-1.3 0.0 -7.0 -6.5"/>
<path d="M284 309q0.4 1.7 1.9 6.3"/>
<path d="M70 327q5.0 3.9 3.0 13.9"/>
<path d="M302 262q-2.8 3.8 1.9 7.6"/>
<path d="M132 325q0.8 -3.7 3.3 -5.7"/>
<path d="M65 242q-1.8 3.3 -1.1 12.9"/>
<path d="M79 269q-2.3 -3.9 -7.8 -3.3"/>
<path d="M224 291q2.2 6.3 6.1 12.1"/>
<path d="M200 294q-0.8 4.0 -6.1 2.3"/>
<path d="M166 287q0.6 5.2 -1.7 14.9"/>
<path d="M271 343q-4.7 4.0 -9.0 13.2"/>
<path d="M239 254q-3.8 -5.7 -1.3 -11.8"/>
<path d="M282 273q-7.5 -1.8 -14.2 -3.6"/>
<path d="M196 321q3.1 3.7 2.0 6.6"/>
<path d="M105 330q8.2 -1.1 8.5 -7.6"/>
<path d="M249 248q8.3 -0.8 12.8 0.9"/>
<path d="M162 286q0.5 5.6 0.0 13.0"/>
<path d="M43 284q-5.4 5.2 -5.6 12.0"/>
<path d="M71 264q-6.7 -1.8 -6.3 -3.3"/>
<path d="M73 277q2.0 6.4 3.5 6.1"/>
<path d="M288 279q-4.4 0.5 -5.3 4.0"/>
<path d="M311 224q4.6 -3.6 10.2 -3.5"/>
<path d="M318 233q-7.4 -4.6 -10.0 -4.8"/>
<path d="M325 316q-4.0 -5.8 -1.6 -14.9"/>
<path d="M250 239q-9.0 4.2 -15.2 4.2"/>
<path d="M61 299q-1.7 8.5 -1.3 11.0"/>
<path d="M248 277q0.4 -6.7 -4.0 -9.5"/>
<path d="M183 288q-5.1 3.2 -4.9 4.2"/>
<path d="M76 312q-5.0 1.6 -15.5 -0.5"/>
<path d="M128 214q-2.9 -4.7 -12.6 -4.7"/>
<path d="M59 342q1.5 -8.2 -0.7 -10.8"/>
<path d="M183 300q-5.9 -1.3 -6.1 -4.6"/>
<path d="M293 227q5.7 -0.7 6.8 0.3"/>
<path d="M155 344q-1.7 -6.8 -6.6 -5.5"/>
<path d="M99 304q1.7 1.4 3.0 5.6"/>
<path d="M321 222q4.0 -5.1 3.2 -9.4"/>
<path d="M223 253q3.2 4.0 1.7 10.4"/>
<path d="M82 265q4.4 3.0 7.5 5.2"/>
<path d="M200 248q1.8 -1.9 6.2 1.0"/>
<path d="M191 244q1.7 -4.1 0.9 -12.0"/>
<path d="M176 266q1.2 3.1 -2.4 6.2"/>
<path d="M40 335q-5.8 -6.0 -10.7 -6.0"/>
<path d="M330 231q-8.4 6.0 -10.7 11.9"/>
<path d="M162 242q0.6 -2.5 9.0 -4.7"/>
<path d="M10 305q1.5 -4.1 10.2 -11.1"/>
<path d="M106 273q-4.3 5.3 -2.8 8.6"/>
<path d="M37 340q5.1 -1.2 15.1 4.3"/>
<path d="M248 281q1.7 -8.8 1.3 -11.0"/>
<path d="M225 278q-0.5 0.7 5.9 -1.4"/>
<path d="M306 266q-2.3 -5.9 -2.8 -11.3"/>
<path d="M202 212q-4.2 6.1 -4.6 12.6"/>
<path d="M91 257q-0.3 -5.6 -7.9 -10.9"/>
<path d="M73 254q4.6 2.4 7.8 3.0"/>
<path d="M86 233q3.2 0.3 6.4 4.5"/>
<path d="M293 285q-6.4 6.2 -5.5 8.7"/>
<path d="M250 258q-2.9 -6.5 -1.4 -8.6"/>
<path d="M71 291q-7.3 -3.0 -8.3 -10.3"/>
<path d="M162 260q-7.6 -0.9 -10.3 -0.2"/>
<path d="M216 306q6.5 0.4 6.8 -4.1"/>
<path d="M238 342q7.7 2.2 8.9 10.5"/>
<path d="M199 338q1.3 6.5 -3.9 14.0"/>
<path d="M55 238q1.0 -4.9 4.9 -9.0"/>
<path d="M307 243q6.2 -0.0 15.4 1.8"/>
<path d="M322 247q4.3 1.6 12.8 7.6"/>
<path d="M310 239q2.2 -5.0 7.6 -5.5"/>
<path d="M183 285q-6.1 6.0 -8.9 6.6"/>
<path d="M309 311q-0.6 -5.4 2.8 -6.1"/>
<path d="M58 341q6.7 -7.3 12.5 -8.5"/>
<path d="M146 216q1.9 1.1 7.1 -4.9"/>
<path d="M73 334q-5.5 9.1 -4.7 11.7"/>
<path d="M136 255q-5.4 -7.9 -6.8 -9.8"/>
<path d="M193 211q0.6 -4.8 6.5 -6.8"/>
<path d="M45 251q-6.2 -3.0 -9.7 -2.7"/>
<path d="M165 315q-6.5 -0.4 -12.6 5.2"/>
<path d="M63 324q-4.7 3.4 -9.7 1.3"/>
<path d="M129 258q-1.7 2.1 -4.1 4.6"/>
<path d="M168 270q-9.0 5.0 -13.0 2.3"/>
<path d="M45 327q1.3 2.8 6.3 12.4"/>
<path d="M182 323q8.0 -9.7 8.3 -12.2"/>
<path d="M130 223q2.1 -2.9 0.3 -10.5"/>
<path d="M330 301q0.7 -0.9 8.1 -8.1"/>
<path d="M37 220q3.4 -7.6 4.2 -7.7"/>
<path d="M76 306q8.9 -1.0 10.8 2.6"/>
<path d="M235 310q-3.4 -8.6 -10.0 -9.3"/>
<path d="M70 281q4.7 -3.8 8.0 -1.6"/>
<path d="M281 269q-9.2 1.0 -12.6 -1.7"/>
<path d="M266 326q-3.5 7.3 -1.6 8.2"/>
<path d="M149 261q-7.9 -2.1 -12.9 -1.6"/>
<path d="M255 314q2.5 5.1 -1.9 6.5"/>
<path d="M199 263q2.7 -4.5 10.0 -2.7"/>
<path d="M121 290q-3.9 5.5 -10.2 11.6"/>
<path d="M221 290q-3.9 -3.7 -8.1 -7.4"/>
<path d="M276 234q3.8 -7.8 2.0 -8.8"/>
<path d="M164 269q-2.9 -6.8 -1.9 -7.8"/>
<path d="M189 287q1.5 3.7 7.8 0.0"/>
<path d="M155 285q1.0 7.5 -3.1 12.2"/>
<path d="M8 268q-0.9 -1.2 -6.4 0.5"/>
<path d="M102 294q-1.9 -2.6 -9.5 -5.6"/>
<path d="M119 217q-4.3 -2.8 -9.1 -3.1"/>
<path d="M10 213q4.7 3.5 3.8 5.8"/>
<path d="M85 305q-0.2 -4.6 -4.4 -4.9"/>
<path d="M329 227q2.0 6.7 -1.9 8.3"/>
<path d="M195 228q-9.4 6.2 -11.7 5.7"/>
<path d="M279 336q1.9 -7.6 -3.9 -11.5"/>
<path d="M106 225q-0.3 8.3 5.9 12.7"/>
<path d="M136 328q3.1 -10.1 0.7 -12.8"/>
<path d="M93 258q-2.7 4.7 -11.5 5.5"/>
<path d="M307 303q-1.4 6.9 -6.9 8.7"/>
<path d="M127 257q-0.1 -6.7 -6.2 -5.4"/>
<path d="M217 275q1.8 9.2 4.0 11.0"/>
<path d="M293 288q2.4 -2.8 10.2 -10.8"/>
<path d="M276 344q-2.1 -3.7 0.6 -9.9"/>
<path d="M76 312q-7.5 -4.8 -12.7 -6.4"/>
<path d="M299 299q-4.7 5.2 -8.4 8.0"/>
<path d="M174 247q9.4 -2.7 14.7 -1.9"/>
<path d="M71 308q0.4 -3.9 5.5 -11.3"/>
<path d="M176 259q-3.3 -0.8 -8.9 -5.5"/>
<path d="M324 223q-5.7 -2.7 -14.0 -6.6"/>
<path d="M283 212q2.3 -7.4 3.2 -11.8"/>
<path d="M207 225q-0.8 1.8 -8.5 -1.4"/>
<path d="M160 311q-6.9 6.6 -8.4 7.5"/>
<path d="M254 312q2.2 4.1 12.3 7.1"/>
<path d="M165 216q-5.6 2.0 -13.1 7.0"/>
<path d="M270 257q0.6 0.7 8.0 -6.1"/>
<path d="M31 243q0.8 -0.7 0.9 -7.1"/>
<path d="M198 256q1.0 -6.1 0.7 -14.2"/>
<path d="M112 264q3.9 -2.9 15.7 -0.9"/>
<path d="M81 317q3.3 1.0 2.4 7.3"/>
<path d="M323 270q3.4 -2.0 11.4 -8.5"/>
</g>
<polygon points="7.0,252.0 40.0,254.0 77.0,270.0 107.0,265.0 131.0,267.0 172.0,283.0 200.0,300.0 245.0,329.0 267.0,338.0 290.0,356.0 320.0,386.0 355.0,420.0 375.0,441.0 393.0,464.0 405.0,484.0 386.0,484.0 380.0,475.0 365.0,457.5 350.0,440.0 335.0,425.0 317.5,405.0 300.0,387.5 282.5,371.2 262.5,352.5 243.8,336.2 225.0,323.8 204.0,308.0 190.0,298.0 172.3,288.6 150.0,279.0 131.7,272.9 106.4,270.4 90.0,272.5 76.0,276.0 60.0,267.0 40.5,259.5 25.0,258.0 7.0,257.0" fill="#f8f8f6"/>
<polygon points="7.0,257.0 25.0,258.0 40.5,259.5 60.0,267.0 76.0,276.0 90.0,272.5 106.4,270.4 131.7,272.9 150.0,279.0 172.3,288.6 190.0,298.0 204.0,308.0 225.0,323.8 243.8,336.2 262.5,352.5 282.5,371.2 300.0,387.5 317.5,405.0 335.0,425.0 350.0,440.0 365.0,457.5 380.0,475.0 386.0,484.0 7.0,484.0" fill="#d4dadc"/>
<polyline points="95.0,207.0 95.0,240.0 98.0,245.0 90.0,256.0 84.0,270.0" fill="none" stroke="#dcdcdc" stroke-width="3.3" stroke-linejoin="round" stroke-linecap="round"/><polyline points="95.0,207.0 95.0,240.0 98.0,245.0 90.0,256.0 84.0,270.0" fill="none" stroke="#fff" stroke-width="2.0" stroke-linejoin="round" stroke-linecap="round"/>
<polyline points="98.0,246.0 104.0,256.0 128.0,249.0 135.0,225.0 150.0,216.0 198.0,214.0 225.0,232.0 253.0,257.0 249.0,290.0 244.0,326.0" fill="none" stroke="#dcdcdc" stroke-width="3.3" stroke-linejoin="round" stroke-linecap="round"/><polyline points="98.0,246.0 104.0,256.0 128.0,249.0 135.0,225.0 150.0,216.0 198.0,214.0 225.0,232.0 253.0,257.0 249.0,290.0 244.0,326.0" fill="none" stroke="#fff" stroke-width="2.0" stroke-linejoin="round" stroke-linecap="round"/>
<polyline points="286.0,207.0 262.0,240.0 253.0,258.0" fill="none" stroke="#dcdcdc" stroke-width="3.1" stroke-linejoin="round" stroke-linecap="round"/><polyline points="286.0,207.0 262.0,240.0 253.0,258.0" fill="none" stroke="#fff" stroke-width="1.8" stroke-linejoin="round" stroke-linecap="round"/>
<polyline points="7.0,252.0 40.0,254.0 77.0,270.0 107.0,265.0 131.0,267.0 172.0,283.0 200.0,300.0 245.0,329.0 267.0,338.0 290.0,356.0 320.0,386.0 355.0,420.0 375.0,441.0 393.0,464.0 405.0,484.0" fill="none" stroke="#dcdcdc" stroke-width="4.1" stroke-linejoin="round" stroke-linecap="round"/><polyline points="7.0,252.0 40.0,254.0 77.0,270.0 107.0,265.0 131.0,267.0 172.0,283.0 200.0,300.0 245.0,329.0 267.0,338.0 290.0,356.0 320.0,386.0 355.0,420.0 375.0,441.0 393.0,464.0 405.0,484.0" fill="none" stroke="#fff" stroke-width="2.8" stroke-linejoin="round" stroke-linecap="round"/>
<polyline points="360.0,421.0 390.0,405.0 408.0,393.0 430.0,372.0 452.0,359.0 492.0,349.0 548.0,333.0 596.0,322.0 636.0,314.0 706.0,311.0 744.0,320.0 787.0,325.0 813.0,324.0 827.0,319.0 848.0,302.0 874.0,288.0 893.0,283.0 920.0,290.0 971.0,302.0 1022.0,299.0 1120.0,292.0" fill="none" stroke="#dcdcdc" stroke-width="4.9" stroke-linejoin="round" stroke-linecap="round"/><polyline points="360.0,421.0 390.0,405.0 408.0,393.0 430.0,372.0 452.0,359.0 492.0,349.0 548.0,333.0 596.0,322.0 636.0,314.0 706.0,311.0 744.0,320.0 787.0,325.0 813.0,324.0 827.0,319.0 848.0,302.0 874.0,288.0 893.0,283.0 920.0,290.0 971.0,302.0 1022.0,299.0 1120.0,292.0" fill="none" stroke="#fff" stroke-width="3.6" stroke-linejoin="round" stroke-linecap="round"/>
<polyline points="566.0,207.0 580.0,230.0 615.0,290.0 633.0,308.0 660.0,343.0 684.0,386.0 707.0,419.0 730.0,449.0 745.0,478.0 749.0,484.0" fill="none" stroke="#dcdcdc" stroke-width="4.9" stroke-linejoin="round" stroke-linecap="round"/><polyline points="566.0,207.0 580.0,230.0 615.0,290.0 633.0,308.0 660.0,343.0 684.0,386.0 707.0,419.0 730.0,449.0 745.0,478.0 749.0,484.0" fill="none" stroke="#fff" stroke-width="3.6" stroke-linejoin="round" stroke-linecap="round"/>
<polyline points="395.0,208.0 380.0,218.0 340.0,245.0 314.0,266.0 290.0,300.0 279.0,324.0 262.0,344.0" fill="none" stroke="#dcdcdc" stroke-width="3.3" stroke-linejoin="round" stroke-linecap="round"/><polyline points="395.0,208.0 380.0,218.0 340.0,245.0 314.0,266.0 290.0,300.0 279.0,324.0 262.0,344.0" fill="none" stroke="#fff" stroke-width="2.0" stroke-linejoin="round" stroke-linecap="round"/>
<polyline points="452.0,343.0 492.0,322.0 540.0,309.0 576.0,301.0 660.0,256.0 744.0,211.0 750.0,207.0" fill="none" stroke="#dcdcdc" stroke-width="3.7" stroke-linejoin="round" stroke-linecap="round"/><polyline points="452.0,343.0 492.0,322.0 540.0,309.0 576.0,301.0 660.0,256.0 744.0,211.0 750.0,207.0" fill="none" stroke="#fff" stroke-width="2.4" stroke-linejoin="round" stroke-linecap="round"/>
<polyline points="440.0,296.0 520.0,256.0 626.0,207.0" fill="none" stroke="#dcdcdc" stroke-width="3.3" stroke-linejoin="round" stroke-linecap="round"/><polyline points="440.0,296.0 520.0,256.0 626.0,207.0" fill="none" stroke="#fff" stroke-width="2.0" stroke-linejoin="round" stroke-linecap="round"/>
<polyline points="615.0,292.0 700.0,275.0 760.0,262.0" fill="none" stroke="#dcdcdc" stroke-width="3.1" stroke-linejoin="round" stroke-linecap="round"/><polyline points="615.0,292.0 700.0,275.0 760.0,262.0" fill="none" stroke="#fff" stroke-width="1.8" stroke-linejoin="round" stroke-linecap="round"/>
<polyline points="640.0,461.0 700.0,424.0 763.0,382.0 830.0,340.0 900.0,286.0" fill="none" stroke="#dcdcdc" stroke-width="3.7" stroke-linejoin="round" stroke-linecap="round"/><polyline points="640.0,461.0 700.0,424.0 763.0,382.0 830.0,340.0 900.0,286.0" fill="none" stroke="#fff" stroke-width="2.4" stroke-linejoin="round" stroke-linecap="round"/>
<polyline points="820.0,339.0 870.0,300.0 932.7,264.0 1000.0,243.0 1083.0,226.8 1121.0,223.0" fill="none" stroke="#dcdcdc" stroke-width="3.9000000000000004" stroke-linejoin="round" stroke-linecap="round"/><polyline points="820.0,339.0 870.0,300.0 932.7,264.0 1000.0,243.0 1083.0,226.8 1121.0,223.0" fill="none" stroke="#fff" stroke-width="2.6" stroke-linejoin="round" stroke-linecap="round"/>
<polyline points="962.7,207.0 1040.0,217.0 1121.0,226.8" fill="none" stroke="#dcdcdc" stroke-width="3.3" stroke-linejoin="round" stroke-linecap="round"/><polyline points="962.7,207.0 1040.0,217.0 1121.0,226.8" fill="none" stroke="#fff" stroke-width="2.0" stroke-linejoin="round" stroke-linecap="round"/>
<polyline points="895.0,207.0 893.0,283.0 891.0,366.0" fill="none" stroke="#dcdcdc" stroke-width="3.1" stroke-linejoin="round" stroke-linecap="round"/><polyline points="895.0,207.0 893.0,283.0 891.0,366.0" fill="none" stroke="#fff" stroke-width="1.8" stroke-linejoin="round" stroke-linecap="round"/>
<polyline points="935.0,300.0 920.0,340.0 917.0,400.0 914.0,484.0" fill="none" stroke="#dcdcdc" stroke-width="3.1" stroke-linejoin="round" stroke-linecap="round"/><polyline points="935.0,300.0 920.0,340.0 917.0,400.0 914.0,484.0" fill="none" stroke="#fff" stroke-width="1.8" stroke-linejoin="round" stroke-linecap="round"/>
<polyline points="992.7,347.0 992.7,433.0" fill="none" stroke="#dcdcdc" stroke-width="2.9000000000000004" stroke-linejoin="round" stroke-linecap="round"/><polyline points="992.7,347.0 992.7,433.0" fill="none" stroke="#fff" stroke-width="1.6" stroke-linejoin="round" stroke-linecap="round"/>
<polyline points="1060.0,306.0 1060.0,433.0" fill="none" stroke="#dcdcdc" stroke-width="2.9000000000000004" stroke-linejoin="round" stroke-linecap="round"/><polyline points="1060.0,306.0 1060.0,433.0" fill="none" stroke="#fff" stroke-width="1.6" stroke-linejoin="round" stroke-linecap="round"/>
<polyline points="1086.6,290.0 1086.6,484.0" fill="none" stroke="#dcdcdc" stroke-width="3.1" stroke-linejoin="round" stroke-linecap="round"/><polyline points="1086.6,290.0 1086.6,484.0" fill="none" stroke="#fff" stroke-width="1.8" stroke-linejoin="round" stroke-linecap="round"/>
<polyline points="895.0,339.4 1121.0,342.0" fill="none" stroke="#dcdcdc" stroke-width="3.1" stroke-linejoin="round" stroke-linecap="round"/><polyline points="895.0,339.4 1121.0,342.0" fill="none" stroke="#fff" stroke-width="1.8" stroke-linejoin="round" stroke-linecap="round"/>
<polyline points="845.0,380.0 870.0,372.0 891.0,367.6 1121.0,368.0" fill="none" stroke="#dcdcdc" stroke-width="3.3" stroke-linejoin="round" stroke-linecap="round"/><polyline points="845.0,380.0 870.0,372.0 891.0,367.6 1121.0,368.0" fill="none" stroke="#fff" stroke-width="2.0" stroke-linejoin="round" stroke-linecap="round"/>
<polyline points="1004.0,367.6 1060.0,400.0 1121.0,441.0" fill="none" stroke="#dcdcdc" stroke-width="3.3" stroke-linejoin="round" stroke-linecap="round"/><polyline points="1004.0,367.6 1060.0,400.0 1121.0,441.0" fill="none" stroke="#fff" stroke-width="2.0" stroke-linejoin="round" stroke-linecap="round"/>
<polyline points="918.0,307.5 1121.0,309.0" fill="none" stroke="#dcdcdc" stroke-width="2.9000000000000004" stroke-linejoin="round" stroke-linecap="round"/><polyline points="918.0,307.5 1121.0,309.0" fill="none" stroke="#fff" stroke-width="1.6" stroke-linejoin="round" stroke-linecap="round"/>
<polyline points="830.0,483.0 850.0,430.0 870.0,400.0 891.0,367.6" fill="none" stroke="#dcdcdc" stroke-width="3.1" stroke-linejoin="round" stroke-linecap="round"/><polyline points="830.0,483.0 850.0,430.0 870.0,400.0 891.0,367.6" fill="none" stroke="#fff" stroke-width="1.8" stroke-linejoin="round" stroke-linecap="round"/>
</svg>
</div>
<div class="tx ml" style="left:199.20px;top:212.98px;font-size:7.41px;font-weight:normal;color:#8794a5;transform:scaleX(1.0379);">PACIFIC</div>
<div class="tx ml" style="left:192.80px;top:222.31px;font-size:7.70px;font-weight:normal;color:#8794a5;transform:scaleX(1.0286);">PALISADES</div>
<div class="tx ml" style="left:632.20px;top:220.18px;font-size:7.85px;font-weight:normal;color:#8794a5;">WEST LOS</div>
<div class="tx ml" style="left:634.00px;top:230.18px;font-size:7.41px;font-weight:normal;color:#8794a5;transform:scaleX(1.0371);">ANGELES</div>
<div class="tx ml" style="left:782.00px;top:230.38px;font-size:7.85px;font-weight:normal;color:#8794a5;transform:scaleX(1.0230);">BEVERLYWOOD</div>
<div class="tx ml" style="left:952.50px;top:254.45px;font-size:7.99px;font-weight:normal;color:#8794a5;transform:scaleX(0.9806);">MID-CITY</div>
<div class="tx ml" style="left:978.90px;top:319.54px;font-size:8.43px;font-weight:normal;color:#8794a5;transform:scaleX(0.9679);">WEST ADAMS</div>
<div class="tx ml" style="left:723.50px;top:345.75px;font-size:7.99px;font-weight:normal;color:#8794a5;">PALMS</div>
<div class="tx ml" style="left:779.20px;top:364.44px;font-size:11.48px;font-weight:normal;color:#8794a5;transform:scaleX(0.9643);">Culver City</div>
<div class="tx ml" style="left:977.00px;top:401.85px;font-size:7.56px;font-weight:normal;color:#8794a5;transform:scaleX(1.0857);">BALDWIN</div>
<div class="tx ml" style="left:983.80px;top:410.68px;font-size:7.85px;font-weight:normal;color:#8794a5;">HILLS/</div>
<div class="tx ml" style="left:972.70px;top:420.41px;font-size:7.70px;font-weight:normal;color:#8794a5;transform:scaleX(1.0333);">CRENSHAW</div>
<div class="tx ml" style="left:1072.70px;top:434.71px;font-size:7.70px;font-weight:normal;color:#8794a5;transform:scaleX(1.0333);">LEIMERT PA</div>
<div class="tx ml" style="left:590.40px;top:460.98px;font-size:7.41px;font-weight:normal;color:#8794a5;transform:scaleX(1.0575);">MAR VISTA</div>
<div class="tx ml" style="left:325.40px;top:371.86px;font-size:13.52px;font-weight:normal;color:#8794a5;transform:scaleX(0.9762);">SANTA MONICA</div>
<div class="tx ml" style="left:539.70px;top:284.18px;font-size:7.85px;font-weight:normal;color:#8794a5;transform:scaleX(0.9905);">SAWTELLE</div>
<div class="tx fl" style="left:509.6px;top:343.6px;font-size:7.3px;transform:translate(-50%,-50%) rotate(-15deg);transform-origin:50% 50%">Santa Monica Freeway</div>
<div class="tx fl" style="left:744.8px;top:318.9px;font-size:7.3px;transform:translate(-50%,-50%) rotate(11.3deg);transform-origin:50% 50%">Santa Monica Freeway</div>
<div class="tx fl" style="left:937px;top:293.5px;font-size:7.3px;transform:translate(-50%,-50%) rotate(13.3deg);transform-origin:50% 50%">Santa Monica Freeway</div>
<div class="tx fl" style="left:600px;top:266px;font-size:7.3px;transform:translate(-50%,-50%) rotate(57deg);transform-origin:50% 50%">San Diego Freeway</div>
<div class="tx fl" style="left:665px;top:357px;font-size:7.3px;transform:translate(-50%,-50%) rotate(56deg);transform-origin:50% 50%">San Diego Freeway</div>
<div class="tx fl" style="left:1100px;top:287px;font-size:7.3px;transform:rotate(-2deg)">Santa</div>
<div class="tx fl" style="left:914px;top:466px;font-size:7px;transform:translate(-50%,-50%) rotate(75deg)">South La</div>
<div class="tx fl" style="left:980px;top:450px;font-size:7px;transform:translate(-50%,-50%) rotate(-78deg)">rea Avenue</div>
<svg style="left:550px;top:260px" width="28" height="30" viewBox="550 260 28 30"><path d="M563.2 286.5 C560 283 554.4 279.5 554.4 273.7 A8.8 8.8 0 1 1 572 273.7 C572 279.5 566.4 283 563.2 286.5Z" fill="#fff" stroke="#e6e6e6" stroke-width="0.8"/><circle cx="563.2" cy="273.7" r="5" fill="#6ccb92"/></svg>
<div class="tx" style="left:537.10px;top:249.74px;font-size:9.30px;font-weight:bold;color:#2a2a2a;transform:scaleX(0.9887);">WM0000125</div>
<svg style="left:545px;top:354px" width="37" height="37" viewBox="545 354 37 37"><circle cx="563.2" cy="372.4" r="15.3" fill="#b9e3a0" fill-opacity="0.7"/><circle cx="563.2" cy="372.4" r="11.6" fill="#8ad46a"/></svg>
<div class="tx" style="left:560.20px;top:366.97px;font-size:11.34px;font-weight:normal;color:#222;">2</div>
<div class="abs" style="left:15px;top:216px;width:26px;height:49px;border:1.6px solid #b8b8b8;border-radius:3px;background:#fff"></div>
<div class="abs" style="left:16px;top:240px;width:24px;height:1px;background:#cfcfcf"></div>
<svg style="left:23px;top:223px" width="11" height="11" viewBox="0 0 11 11"><path d="M5.5 1.2V9.8M1.2 5.5H9.8" stroke="#111" stroke-width="2"/></svg>
<svg style="left:23px;top:247px" width="11" height="11" viewBox="0 0 11 11"><path d="M1.2 5.5H9.8" stroke="#111" stroke-width="2"/></svg>
<div class="abs" style="left:922px;top:470px;width:198px;height:13px;background:rgba(255,255,255,0.7)"></div>
<div class="tx" style="left:925.3px;top:471.6px;font-size:8.7px;color:#333;transform:scaleX(0.987)"><span style="color:#0078a8;text-decoration:underline;text-decoration-color:#b9d6e6">Leaflet</span> | © <span style="color:#0078a8;text-decoration:underline;text-decoration-color:#b9d6e6">OpenStreetMap</span> contributors © <span style="color:#0078a8;text-decoration:underline;text-decoration-color:#b9d6e6">CARTO</span></div>
<div class="card" style="left:1127px;top:166px;width:367px;height:318px"></div>
<svg style="left:1397px;top:182px" width="11" height="11" viewBox="0 0 11 11"><path d="M5.3 1V10M0.7 5.5H9.9" stroke="#222" stroke-width="1.25"/></svg>
<svg style="left:1420px;top:181px" width="14" height="14" viewBox="0 0 14 14"><circle cx="5.6" cy="5.0" r="3.7" fill="none" stroke="#222" stroke-width="1.25"/><path d="M8.3 7.8L12.2 11.7" stroke="#222" stroke-width="1.35"/></svg>
<svg style="left:1447px;top:183px" width="12" height="8" viewBox="0 0 12 8"><rect x="0" y="0" width="2.9" height="8" fill="#1e1e1e"/><rect x="4.1" y="0" width="2.9" height="8" fill="#1e1e1e"/><rect x="8.2" y="0" width="2.9" height="8" fill="#1e1e1e"/></svg>
<svg style="left:1472px;top:182px" width="11" height="11" viewBox="0 0 11 11"><path d="M1.4 4.2V1.7H3.9M6.9 1.7H9.4V4.2M9.4 7.2V9.7H6.9M3.9 9.7H1.4V7.2" fill="none" stroke="#222" stroke-width="1.4"/></svg>
<svg style="left:1205px;top:218px" width="9" height="10" viewBox="0 0 9 10"><path d="M4.3 9.5V1.3M1 4.6L4.3 1.2 7.6 4.6" fill="none" stroke="#7a7a7a" stroke-width="1.1"/></svg>
<div class="hl" style="left:1130px;top:247px;width:360px"></div>
<div class="hl" style="left:1130px;top:288px;width:360px"></div>
<div class="hl" style="left:1130px;top:328px;width:360px"></div>
<div class="hl" style="left:1130px;top:369px;width:360px"></div>
<div class="card" style="left:753px;top:490px;width:741px;height:236px"></div>
<svg style="left:1397px;top:505px" width="11" height="11" viewBox="0 0 11 11"><path d="M1.4 4.2V1.7H3.9M6.9 1.7H9.4V4.2M9.4 7.2V9.7H6.9M3.9 9.7H1.4V7.2" fill="none" stroke="#222" stroke-width="1.4"/></svg>
<svg style="left:1420px;top:504px" width="14" height="14" viewBox="0 0 14 14"><circle cx="5.6" cy="5.0" r="3.7" fill="none" stroke="#222" stroke-width="1.25"/><path d="M8.3 7.8L12.2 11.7" stroke="#222" stroke-width="1.35"/></svg>
<svg style="left:1446px;top:506px" width="13" height="9" viewBox="0 0 13 9"><path d="M0.3 1.7H12.3M2.3 5H10.3M5 8.2H7.7" stroke="#333" stroke-width="1.3"/></svg>
<svg style="left:1472px;top:506px" width="12" height="9" viewBox="0 0 12 9"><rect x="0" y="0" width="2.9" height="9" fill="#1e1e1e"/><rect x="4.1" y="0" width="2.9" height="9" fill="#1e1e1e"/><rect x="8.2" y="0" width="2.9" height="9" fill="#1e1e1e"/></svg>
<div class="cb" style="left:766px;top:541px"></div>
<svg style="left:853px;top:542px" width="9" height="10" viewBox="0 0 9 10"><path d="M4.5 0.5V8.8M1.2 5.4L4.5 8.8 7.8 5.4" fill="none" stroke="#7a7a7a" stroke-width="1.1"/></svg>
<div class="hl" style="left:757px;top:570px;width:721px"></div>
<div class="hl" style="left:757px;top:611px;width:721px"></div>
<div class="hl" style="left:757px;top:651px;width:721px"></div>
<div class="hl" style="left:757px;top:692px;width:721px"></div>
<div class="cb" style="left:766px;top:585px"></div>
<svg style="left:1447px;top:585.5px" width="12" height="12" viewBox="0 0 12 12"><path d="M0.9 0.9L11.1 11.1M11.1 0.9L0.9 11.1" stroke="#666" stroke-width="1.25"/></svg>
<div class="cb" style="left:766px;top:626px"></div>
<svg style="left:1447px;top:626.0px" width="12" height="12" viewBox="0 0 12 12"><path d="M0.9 0.9L11.1 11.1M11.1 0.9L0.9 11.1" stroke="#666" stroke-width="1.25"/></svg>
<div class="cb" style="left:766px;top:666px"></div>
<svg style="left:1447px;top:666.5px" width="12" height="12" viewBox="0 0 12 12"><path d="M0.9 0.9L11.1 11.1M11.1 0.9L0.9 11.1" stroke="#666" stroke-width="1.25"/></svg>
<div class="cb" style="left:766px;top:706px"></div>
<svg style="left:1447px;top:707.0px" width="12" height="12" viewBox="0 0 12 12"><path d="M0.9 0.9L11.1 11.1M11.1 0.9L0.9 11.1" stroke="#666" stroke-width="1.25"/></svg>
<div class="abs" style="left:1478px;top:525px;width:12px;height:197px;background:#f1f1f1"></div>
<div class="abs" style="left:1480px;top:536px;width:8px;height:120px;background:#c1c1c1"></div>
<svg style="left:1480px;top:528px" width="8" height="5" viewBox="0 0 8 5"><path d="M0.8 4.5L4 1.2 7.2 4.5Z" fill="#505050"/></svg>
<svg style="left:1480px;top:713px" width="8" height="5" viewBox="0 0 8 5"><path d="M0.8 0.5L4 3.8 7.2 0.5Z" fill="#505050"/></svg>
<div class="card" style="left:6px;top:490px;width:741px;height:236px"></div>
<svg style="left:0;top:0" width="750" height="732">
<rect x="58.8" y="558.90" width="667" height="1" fill="#e6e6e6"/>
<rect x="58.8" y="576.97" width="667" height="1" fill="#e6e6e6"/>
<rect x="58.8" y="595.04" width="667" height="1" fill="#e6e6e6"/>
<rect x="58.8" y="613.11" width="667" height="1" fill="#e6e6e6"/>
<rect x="58.8" y="631.18" width="667" height="1" fill="#e6e6e6"/>
<rect x="58.8" y="649.25" width="667" height="1" fill="#e6e6e6"/>
<rect x="58.8" y="667.32" width="667" height="1" fill="#e6e6e6"/>
<rect x="58.80" y="641.7" width="15.2" height="26.2" fill="#3d9cf0"/>
<rect x="89.65" y="640.0" width="15.2" height="27.9" fill="#3d9cf0"/>
<rect x="120.50" y="638.2" width="15.2" height="29.7" fill="#3d9cf0"/>
<rect x="151.35" y="639.0" width="15.2" height="28.9" fill="#3d9cf0"/>
<rect x="182.20" y="641.0" width="15.2" height="26.9" fill="#3d9cf0"/>
<rect x="213.05" y="620.2" width="15.2" height="47.7" fill="#3d9cf0"/>
<rect x="243.90" y="610.0" width="15.2" height="57.9" fill="#3d9cf0"/>
<rect x="274.75" y="643.0" width="15.2" height="24.9" fill="#3d9cf0"/>
<rect x="305.60" y="640.0" width="15.2" height="27.9" fill="#3d9cf0"/>
<rect x="336.45" y="644.0" width="15.2" height="23.9" fill="#3d9cf0"/>
<rect x="367.30" y="641.0" width="15.2" height="26.9" fill="#3d9cf0"/>
<rect x="398.15" y="639.8" width="15.2" height="28.1" fill="#3d9cf0"/>
<rect x="429.00" y="608.4" width="15.2" height="59.5" fill="#3d9cf0"/>
<rect x="459.85" y="611.8" width="15.2" height="56.1" fill="#3d9cf0"/>
<rect x="490.70" y="637.7" width="15.2" height="30.2" fill="#3d9cf0"/>
<rect x="521.55" y="638.7" width="15.2" height="29.2" fill="#3d9cf0"/>
<rect x="552.40" y="635.9" width="15.2" height="32.0" fill="#3d9cf0"/>
<rect x="583.25" y="634.9" width="15.2" height="33.0" fill="#3d9cf0"/>
<rect x="614.10" y="634.3" width="15.2" height="33.6" fill="#3d9cf0"/>
<rect x="644.95" y="558.0" width="15.2" height="109.9" fill="#3d9cf0"/>
<rect x="675.80" y="612.0" width="15.2" height="55.9" fill="#3d9cf0"/>
<rect x="706.65" y="649.4" width="15.2" height="18.5" fill="#3d9cf0"/>
<rect x="15.6" y="710.1" width="11.5" height="2.1" fill="#2f8ff0"/>
</svg>
<div class="tx" style="left:16.00px;top:11.39px;font-size:15.55px;font-weight:bold;color:#fff;transform:scaleX(0.8417);">Total</div>
<div class="tx" style="left:1220.07px;top:12.16px;font-size:13.52px;font-weight:normal;color:#e8f0ee;transform:scaleX(0.9287);">Realtime - Current month so far</div>
<div class="tx" style="left:1399.37px;top:12.16px;font-size:13.52px;font-weight:normal;color:#e8f0ee;transform:scaleX(0.9287);">|</div>
<div class="tx" style="left:1405.90px;top:12.16px;font-size:13.52px;font-weight:bold;color:#fff;transform:scaleX(0.8250);">UTC</div>
<div class="tx" style="left:140.70px;top:84.11px;font-size:19.77px;font-weight:bold;color:#333;transform:scaleX(0.9521);">5125.71 m</div>
<div class="tx" style="left:231.80px;top:79.65px;font-size:16.57px;font-weight:bold;color:#333;transform:scaleX(0.8222);">3</div>
<div class="tx" style="left:112.60px;top:110.83px;font-size:12.79px;font-weight:normal;color:#444;transform:scaleX(0.9596);">Consumed per current week</div>
<div class="tx" style="left:558.40px;top:82.58px;font-size:18.29px;font-weight:bold;color:#333;transform:scaleX(0.9900);">3</div>
<div class="tx" style="left:523.60px;top:108.43px;font-size:12.79px;font-weight:normal;color:#444;transform:scaleX(0.9622);">Active devices</div>
<div class="tx" style="left:931.70px;top:82.58px;font-size:18.29px;font-weight:bold;color:#f0913a;transform:scaleX(0.9600);">0</div>
<div class="tx" style="left:880.92px;top:108.43px;font-size:12.79px;font-weight:normal;color:#444;transform:scaleX(0.9777);">Low battery devices</div>
<div class="tx" style="left:1305.20px;top:82.58px;font-size:18.29px;font-weight:bold;color:#e9504a;transform:scaleX(0.9600);">0</div>
<div class="tx" style="left:1265.43px;top:108.43px;font-size:12.79px;font-weight:normal;color:#444;transform:scaleX(0.9733);">Inactive devices</div>
<div class="tx" style="left:83.00px;top:178.04px;font-size:10.17px;font-weight:normal;color:#9a9a9a;transform:scaleX(0.8531);">TOTAL</div>
<div class="tx" style="left:259.00px;top:178.04px;font-size:10.17px;font-weight:normal;color:#444;transform:scaleX(0.8661);">ANALYTICS</div>
<div class="tx" style="left:451.70px;top:178.04px;font-size:10.17px;font-weight:normal;color:#444;transform:scaleX(0.8133);">DEVICES</div>
<div class="tx" style="left:628.35px;top:178.04px;font-size:10.17px;font-weight:normal;color:#444;transform:scaleX(0.8661);">CUSTOMERS</div>
<div class="tx" style="left:825.31px;top:178.04px;font-size:10.17px;font-weight:normal;color:#444;transform:scaleX(0.8661);">ALARMS</div>
<div class="tx" style="left:1008.42px;top:178.04px;font-size:10.17px;font-weight:normal;color:#444;transform:scaleX(0.8661);">SETTINGS</div>
<div class="tx" style="left:1138.50px;top:179.26px;font-size:14.39px;font-weight:bold;color:#222;transform:scaleX(0.9578);">Water Meters</div>
<div class="tx" style="left:1139.80px;top:217.67px;font-size:10.47px;font-weight:normal;color:#757575;transform:scaleX(0.8896);">Serial Number</div>
<div class="tx" style="left:1245.40px;top:217.67px;font-size:10.47px;font-weight:normal;color:#757575;transform:scaleX(0.9061);">Latest reading</div>
<div class="tx" style="left:1343.70px;top:217.67px;font-size:10.47px;font-weight:normal;color:#757575;transform:scaleX(0.8896);">Status</div>
<div class="tx" style="left:1398.40px;top:217.67px;font-size:10.47px;font-weight:normal;color:#757575;transform:scaleX(0.8966);">Battery level</div>
<div class="tx" style="left:1139.80px;top:261.87px;font-size:10.47px;font-weight:normal;color:#333;transform:scaleX(0.9729);">WM0000123</div>
<div class="tx" style="left:1245.40px;top:261.87px;font-size:10.47px;font-weight:normal;color:#333;transform:scaleX(0.9746);">79371.53 m³</div>
<div class="tx" style="left:1343.70px;top:261.87px;font-size:10.47px;font-weight:normal;color:#333;transform:scaleX(0.9655);">Active</div>
<div class="tx" style="left:1398.40px;top:261.87px;font-size:10.47px;font-weight:normal;color:#333;transform:scaleX(0.8970);">28.2 %</div>
<div class="tx" style="left:1139.80px;top:302.47px;font-size:10.47px;font-weight:normal;color:#333;transform:scaleX(0.9729);">WM0000124</div>
<div class="tx" style="left:1245.40px;top:302.47px;font-size:10.47px;font-weight:normal;color:#333;transform:scaleX(0.9746);">79031.57 m³</div>
<div class="tx" style="left:1343.70px;top:302.47px;font-size:10.47px;font-weight:normal;color:#333;transform:scaleX(0.9655);">Active</div>
<div class="tx" style="left:1398.40px;top:302.47px;font-size:10.47px;font-weight:normal;color:#333;transform:scaleX(0.8970);">28 %</div>
<div class="tx" style="left:1139.80px;top:343.07px;font-size:10.47px;font-weight:normal;color:#333;transform:scaleX(0.9729);">WM0000125</div>
<div class="tx" style="left:1245.40px;top:343.07px;font-size:10.47px;font-weight:normal;color:#333;transform:scaleX(0.9746);">79713.91 m³</div>
<div class="tx" style="left:1343.70px;top:343.07px;font-size:10.47px;font-weight:normal;color:#333;transform:scaleX(0.9655);">Active</div>
<div class="tx" style="left:1398.40px;top:343.07px;font-size:10.47px;font-weight:normal;color:#333;transform:scaleX(0.8970);">28 %</div>
<div class="tx" style="left:765.00px;top:502.76px;font-size:14.39px;font-weight:bold;color:#222;transform:scaleX(0.9474);">Active Alarms</div>
<div class="tx" style="left:793.90px;top:541.37px;font-size:10.47px;font-weight:normal;color:#757575;transform:scaleX(0.8917);">Created time</div>
<div class="tx" style="left:895.40px;top:541.37px;font-size:10.47px;font-weight:normal;color:#757575;transform:scaleX(0.8978);">Originator</div>
<div class="tx" style="left:1033.00px;top:541.37px;font-size:10.47px;font-weight:normal;color:#757575;transform:scaleX(0.8917);">Type</div>
<div class="tx" style="left:793.90px;top:585.77px;font-size:10.47px;font-weight:normal;color:#333;transform:scaleX(0.9557);">2021-03-22 14:17:38</div>
<div class="tx" style="left:895.40px;top:585.77px;font-size:10.47px;font-weight:normal;color:#333;transform:scaleX(0.9567);">WM0000125</div>
<div class="tx" style="left:1033.00px;top:585.77px;font-size:10.47px;font-weight:normal;color:#333;transform:scaleX(0.9569);">Weekly Consumption Threshold Exceeded</div>
<div class="tx" style="left:793.90px;top:626.27px;font-size:10.47px;font-weight:normal;color:#333;transform:scaleX(0.9557);">2021-03-22 14:17:38</div>
<div class="tx" style="left:895.40px;top:626.27px;font-size:10.47px;font-weight:normal;color:#333;transform:scaleX(0.9567);">WM0000125</div>
<div class="tx" style="left:1033.00px;top:626.27px;font-size:10.47px;font-weight:normal;color:#333;transform:scaleX(0.9569);">Daily Consumption Threshold Exceeded</div>
<div class="tx" style="left:793.90px;top:666.77px;font-size:10.47px;font-weight:normal;color:#333;transform:scaleX(0.9557);">2021-03-22 14:17:37</div>
<div class="tx" style="left:895.40px;top:666.77px;font-size:10.47px;font-weight:normal;color:#333;transform:scaleX(0.9567);">WM0000124</div>
<div class="tx" style="left:1033.00px;top:666.77px;font-size:10.47px;font-weight:normal;color:#333;transform:scaleX(0.9569);">Weekly Consumption Threshold Exceeded</div>
<div class="tx" style="left:793.90px;top:707.27px;font-size:10.47px;font-weight:normal;color:#333;transform:scaleX(0.9557);">2021-03-22 14:17:37</div>
<div class="tx" style="left:895.40px;top:707.27px;font-size:10.47px;font-weight:normal;color:#333;transform:scaleX(0.9567);">WM0000124</div>
<div class="tx" style="left:1033.00px;top:707.27px;font-size:10.47px;font-weight:normal;color:#333;transform:scaleX(0.9569);">Daily Consumption Threshold Exceeded</div>
<div class="tx" style="left:21.00px;top:505.96px;font-size:14.39px;font-weight:bold;color:#222;transform:scaleX(0.9375);">Water Consumption</div>
<div class="tx" style="left:14.10px;top:534.64px;font-size:9.74px;font-weight:normal;color:#666;transform:scaleX(0.7960);">35000.0 m³</div>
<div class="tx" style="left:14.10px;top:552.71px;font-size:9.74px;font-weight:normal;color:#666;transform:scaleX(0.7960);">30000.0 m³</div>
<div class="tx" style="left:14.10px;top:570.78px;font-size:9.74px;font-weight:normal;color:#666;transform:scaleX(0.7960);">25000.0 m³</div>
<div class="tx" style="left:14.10px;top:588.85px;font-size:9.74px;font-weight:normal;color:#666;transform:scaleX(0.7960);">20000.0 m³</div>
<div class="tx" style="left:14.10px;top:606.92px;font-size:9.74px;font-weight:normal;color:#666;transform:scaleX(0.7960);">15000.0 m³</div>
<div class="tx" style="left:14.10px;top:624.99px;font-size:9.74px;font-weight:normal;color:#666;transform:scaleX(0.7960);">10000.0 m³</div>
<div class="tx" style="left:18.88px;top:643.06px;font-size:9.74px;font-weight:normal;color:#666;transform:scaleX(0.7960);">5000.0 m³</div>
<div class="tx" style="left:31.61px;top:661.13px;font-size:9.74px;font-weight:normal;color:#666;transform:scaleX(0.7960);">0.0 m³</div>
<div class="tx" style="left:46.40px;top:671.78px;font-size:8.28px;font-weight:normal;color:#555;transform:scaleX(0.9000);">Mar 01</div>
<div class="tx" style="left:108.12px;top:671.78px;font-size:8.28px;font-weight:normal;color:#555;transform:scaleX(0.9000);">Mar 03</div>
<div class="tx" style="left:169.84px;top:671.78px;font-size:8.28px;font-weight:normal;color:#555;transform:scaleX(0.9000);">Mar 05</div>
<div class="tx" style="left:231.56px;top:671.78px;font-size:8.28px;font-weight:normal;color:#555;transform:scaleX(0.9000);">Mar 07</div>
<div class="tx" style="left:293.28px;top:671.78px;font-size:8.28px;font-weight:normal;color:#555;transform:scaleX(0.9000);">Mar 09</div>
<div class="tx" style="left:355.45px;top:671.78px;font-size:8.28px;font-weight:normal;color:#555;transform:scaleX(0.9000);">Mar 11</div>
<div class="tx" style="left:416.72px;top:671.78px;font-size:8.28px;font-weight:normal;color:#555;transform:scaleX(0.9000);">Mar 13</div>
<div class="tx" style="left:478.44px;top:671.78px;font-size:8.28px;font-weight:normal;color:#555;transform:scaleX(0.9000);">Mar 15</div>
<div class="tx" style="left:540.16px;top:671.78px;font-size:8.28px;font-weight:normal;color:#555;transform:scaleX(0.9000);">Mar 17</div>
<div class="tx" style="left:601.88px;top:671.78px;font-size:8.28px;font-weight:normal;color:#555;transform:scaleX(0.9000);">Mar 19</div>
<div class="tx" style="left:663.60px;top:671.78px;font-size:8.28px;font-weight:normal;color:#555;transform:scaleX(0.9000);">Mar 21</div>
<div class="tx" style="left:37.70px;top:703.91px;font-size:9.45px;font-weight:normal;color:#444;transform:scaleX(0.9899);">Daily Consumption</div>
<div class="tx" style="left:711.70px;top:689.44px;font-size:10.17px;font-weight:bold;color:#f4623e;transform:scaleX(0.8810);">total</div>
<div class="tx" style="left:677.30px;top:703.77px;font-size:9.59px;font-weight:normal;color:#444;transform:scaleX(0.9796);">231230.2 m³</div>
</body></html>
